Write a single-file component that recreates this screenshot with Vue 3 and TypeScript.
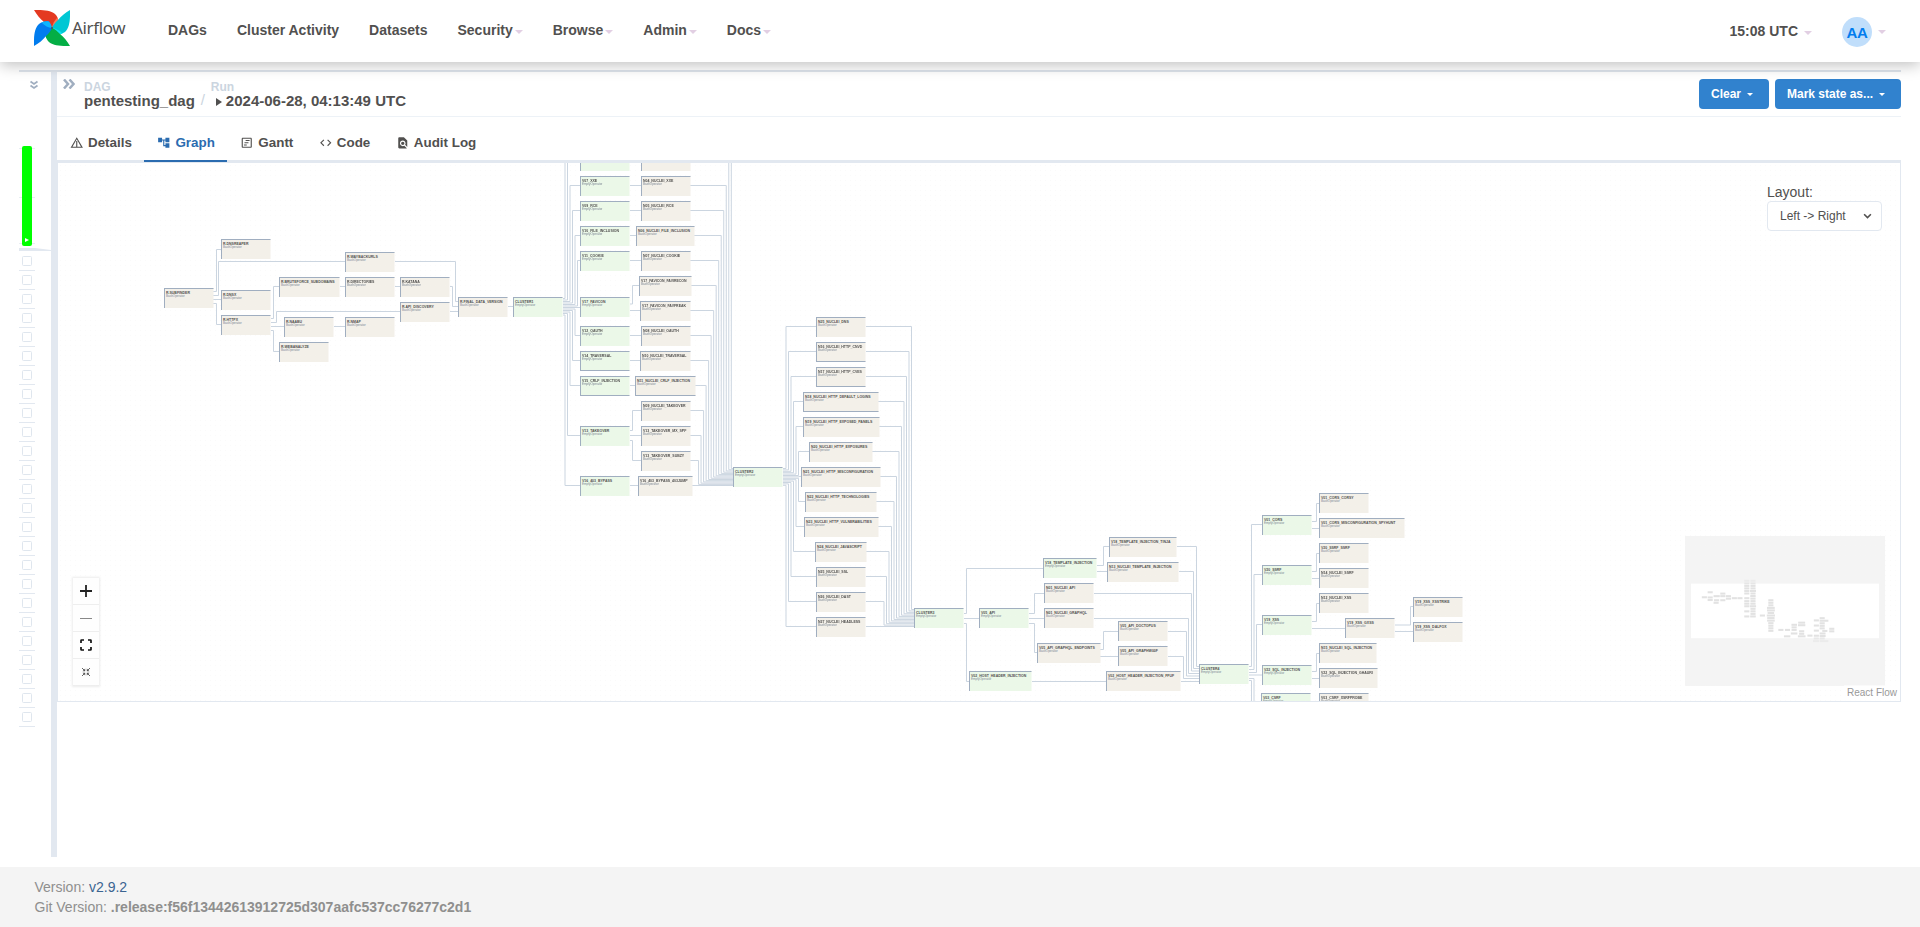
<script setup lang="ts">
interface GraphNode {
  label: string
  x: number
  y: number
  w: number
  empty: boolean
  closed: boolean
}

const ROW = 25
const node = (label: string, x: number, y: number, w = 50, closed = false): GraphNode => ({ label, x, y, w, empty: false, closed })
const group = (label: string, x: number, y: number, w = 50, closed = false): GraphNode => ({ label, x, y, w, empty: true, closed })

const nodes: GraphNode[] = [
  node('R.SUBFINDER', 164, 288),
  node('R.DNSREAPER', 221, 239),
  node('R.DNSX', 221, 290),
  node('R.HTTPX', 221, 315),
  node('R.WAYBACKURLS', 345, 252),
  node('R.BRUTEFORCE_SUBDOMAINS', 279, 277, 61),
  node('R.DIRECTORIES', 345, 277),
  node('R.KATANA', 400, 277),
  node('R.API_DISCOVERY', 400, 302),
  node('R.NAABU', 284, 317),
  node('R.NMAP', 345, 317),
  node('R.WEBANALYZE', 279, 342),
  node('R.FINAL_DATA_VERSION', 458, 297),
  group('CLUSTER1', 513, 297),
  group('V06_LDAP', 580, 126),
  group('V06_SSTI', 580, 151),
  group('V07_XXE', 580, 176),
  group('V09_RCE', 580, 201),
  group('V10_FILE_INCLUSION', 580, 226),
  group('V11_COOKIE', 580, 251),
  group('V17_FAVICON', 580, 297),
  group('V12_OAUTH', 580, 326),
  group('V14_TRAVERSAL', 580, 351, 50, true),
  group('V15_CRLF_INJECTION', 580, 376, 50, true),
  group('V13_TAKEOVER', 580, 426),
  group('V16_403_BYPASS', 580, 476),
  node('N02_NUCLEI_LDAP', 641, 126),
  node('N03_NUCLEI_SSTI', 641, 151),
  node('N04_NUCLEI_XXE', 641, 176),
  node('N05_NUCLEI_RCE', 641, 201),
  node('N06_NUCLEI_FILE_INCLUSION', 636, 226, 59),
  node('N07_NUCLEI_COOKIE', 641, 251),
  node('V17_FAVICON_FAVIRECON', 639, 276, 53),
  node('V17_FAVICON_FAVFREAK', 640, 301, 51),
  node('N08_NUCLEI_OAUTH', 641, 326),
  node('N10_NUCLEI_TRAVERSAL', 640, 351, 51),
  node('N11_NUCLEI_CRLF_INJECTION', 635, 376, 61, true),
  node('N09_NUCLEI_TAKEOVER', 641, 401),
  node('V13_TAKEOVER_MX_SPF', 641, 426),
  node('V13_TAKEOVER_SUBZY', 641, 451),
  node('V16_403_BYPASS_403JUMP', 638, 476, 55),
  group('CLUSTER2', 733, 467),
  node('N25_NUCLEI_DNS', 816, 317),
  node('N16_NUCLEI_HTTP_CNVD', 816, 342, 50, true),
  node('N17_NUCLEI_HTTP_CVES', 816, 367, 50, true),
  node('N18_NUCLEI_HTTP_DEFAULT_LOGINS', 803, 392, 76, true),
  node('N19_NUCLEI_HTTP_EXPOSED_PANELS', 803, 417, 77),
  node('N20_NUCLEI_HTTP_EXPOSURES', 809, 442, 64),
  node('N21_NUCLEI_HTTP_MISCONFIGURATION', 801, 467, 80),
  node('N22_NUCLEI_HTTP_TECHNOLOGIES', 805, 492, 72),
  node('N23_NUCLEI_HTTP_VULNERABILITIES', 804, 517, 75),
  node('N24_NUCLEI_JAVASCRIPT', 815, 542, 52),
  node('N25_NUCLEI_SSL', 816, 567),
  node('N26_NUCLEI_DAST', 816, 592),
  node('N27_NUCLEI_HEADLESS', 816, 617),
  group('CLUSTER3', 914, 608),
  group('V05_API', 979, 608),
  group('V18_TEMPLATE_INJECTION', 1043, 558, 54),
  node('V18_TEMPLATE_INJECTION_TINJA', 1109, 537, 68),
  node('N13_NUCLEI_TEMPLATE_INJECTION', 1107, 562, 72),
  node('N01_NUCLEI_API', 1044, 583),
  node('N01_NUCLEI_GRAPHQL', 1044, 608),
  node('V05_API_GRAPHQL_ENDPOINTS', 1037, 643, 64),
  node('V05_API_DOCTOPUS', 1118, 621),
  node('V05_API_GRAPHW00F', 1118, 646),
  group('V02_HOST_HEADER_INJECTION', 969, 671, 63),
  node('V02_HOST_HEADER_INJECTION_FFUF', 1106, 671, 75),
  group('CLUSTER4', 1199, 664),
  group('V01_CORS', 1262, 515),
  group('V20_SSRF', 1262, 565),
  group('V19_XSS', 1262, 615),
  group('V22_SQL_INJECTION', 1262, 665),
  group('V03_CSRF', 1261, 693),
  node('V01_CORS_CORSY', 1319, 493),
  node('V01_CORS_MISCONFIGURATION_SPYHUNT', 1319, 518, 86),
  node('V20_SSRF_SSRF', 1319, 543),
  node('N14_NUCLEI_SSRF', 1319, 568),
  node('N12_NUCLEI_XSS', 1319, 593),
  node('V19_XSS_GXSS', 1345, 618),
  node('N15_NUCLEI_SQL_INJECTION', 1319, 643, 58),
  node('V22_SQL_INJECTION_GHAURI', 1319, 668, 59),
  node('V03_CSRF_XSRFPROBE', 1319, 693),
  node('V19_XSS_XSSTRIKE', 1413, 597),
  node('V19_XSS_DALFOX', 1413, 622),
  group('V04_OPEN_REDIRECT', 1255, 718, 58),
  node('V04_OPEN_REDIRECT_OPENREDIREX', 1319, 718, 86),
]

const edges: string[] = [
  'M213 291.5H216.5V249.5H221', 'M213 295.5H218.5V261.5H345', 'M213 299.5H221', 'M213 303.5H216.5V324.5H221',
  'M395 261.5H455.5V301.5H458', 'M271 318.5H273.5V286.5H279', 'M271 322.5H276.5V311.5H400', 'M271 326.5H284',
  'M271 330.5H273.5V351.5H279', 'M340 286.5H345', 'M395 286.5H400', 'M450 286.5H452.5V306.5H458', 'M450 311.5H458',
  'M334 326.5H345', 'M508 306.5H513',
  'M630 304H632.5V285.5H639', 'M630 310.5H640', 'M630 430.5H632.5V410.5H641', 'M630 435.5H641',
  'M630 440.5H632.5V460.5H641',
  'M964 613.5H966.5V568.5H1043', 'M964 618.5H979', 'M964 623.5H966.5V681.5H969',
  'M1029 613.5H1034.5V593.5H1044', 'M1029 618.5H1044', 'M1029 623.5H1034.5V652.5H1037',
  'M1097 565.5H1103.5V546.5H1109', 'M1097 571.5H1107', 'M1100 649.5H1103.5V631.5H1118', 'M1100 656.5H1118',
  'M1177 546.5H1196.5V666.5H1199', 'M1179 571.5H1193.5V668.5H1199', 'M1094 593.5H1191.5V671H1199',
  'M1094 618.5H1188.5V673.5H1199', 'M1168 631.5H1186.5V676H1199', 'M1168 656.5H1183.5V678.5H1199',
  'M1181 681.5H1199', 'M1032 681.5H1106',
  'M1249 666.5H1251.5V524.5H1262', 'M1249 669.5H1254V574.5H1262', 'M1249 672.5H1256.5V624.5H1262',
  'M1249 675H1262', 'M1249 678.5H1254V720', 'M1249 680.5H1251.5V740',
  'M1312 521.5H1316.5V503.5H1319', 'M1312 528.5H1319', 'M1312 571.5H1316.5V553.5H1319', 'M1312 578.5H1319',
  'M1312 621.5H1316.5V603.5H1319', 'M1312 628.5H1345', 'M1312 671.5H1316.5V653.5H1319', 'M1312 678.5H1319',
  'M1395 625H1410.5V606.5H1413', 'M1395 631.5H1413',
]

// CLUSTER1 fans out to its groups
const firstFan: [number, number][] = [
  [565, 135.5], [567.5, 160.5], [570, 185.5], [572.5, 210.5], [575, 235.5], [577.5, 260.5], [580, 307],
  [575, 335.5], [572.5, 360.5], [570, 385.5], [567.5, 435.5], [565, 485.5],
]
firstFan.forEach(([x, y], i) => edges.push(`M563 ${298.5 + i * 1.5}H${x}V${y}H580`))

// rows with a single follow-up task, then everything merges into CLUSTER2
for (const y of [160.5, 185.5, 210.5, 235.5, 260.5, 335.5, 360.5, 385.5, 485.5]) edges.push(`M630 ${y}H641`)
for (let i = 0; i < 15; i++) {
  edges.push(`M686 ${135.5 + i * ROW}H${i === 14 ? 733 : 731.3 - i * 2.52}V${468.5 + i * 1.22}H733`)
}

// CLUSTER2 to CLUSTER3
for (let i = 0; i < 13; i++) {
  const y = 326.5 + i * ROW
  const out = i === 6 ? 799 : 798.5 - (Math.abs(i - 6) - 1) * 2.5
  edges.push(`M783 ${468.5 + i * 1.4}H${out}V${y}H816`)
  edges.push(`M866 ${y}H${i === 12 ? 914 : 911.5 - i * 2.5}V${609.5 + i * 1.42}H914`)
}

const SCALE = 4
const canvas = { x: 58, y: 163, bottom: 701 }
const place = (n: GraphNode) => ({
  left: `${(n.x - canvas.x) * SCALE}px`,
  top: `${(n.y - canvas.y) * SCALE}px`,
  width: `${(n.w - 0.4) * SCALE}px`,
})
const labelled = (n: GraphNode) => n.y >= canvas.y && n.y < canvas.bottom

const menu = [
  { label: 'DAGs', caret: false }, { label: 'Cluster Activity', caret: false }, { label: 'Datasets', caret: false },
  { label: 'Security', caret: true }, { label: 'Browse', caret: true }, { label: 'Admin', caret: true },
  { label: 'Docs', caret: true },
]
const tabs = [
  { label: 'Details', icon: 'M12 5.99L19.53 19H4.47L12 5.99M12 2L1 21h22L12 2zm-1 7h2v10h-2z' },
  { label: 'Graph', icon: 'M22 11V3h-7v3H9V3H2v8h7V8h2v10h4v3h7v-8h-7v3h-2V8h2v3z' },
  { label: 'Gantt', icon: 'M19 5v14H5V5h14m0-2H5c-1.1 0-2 .9-2 2v14c0 1.1.9 2 2 2h14c1.1 0 2-.9 2-2V5c0-1.1-.9-2-2-2zM10 7h7v2h-7zM8 11h7v2H8zM7 15h5v2H7z' },
  { label: 'Code', icon: 'M9.4 16.6L4.8 12l4.6-4.6L8 6l-6 6 6 6 1.4-1.4zm5.200 0l4.600-4.600-4.600-4.600L16 6l6 6-6 6-1.400-1.400z' },
  { label: 'Audit Log', icon: 'M14 2H6c-1.1 0-2 .9-2 2v16c0 1.100.9 2 2 2h12c.45 0 .85-.15 1.190-.4l-4.430-4.430c-.8.520-1.740.830-2.760.830-2.760 0-5-2.240-5-5s2.240-5 5-5 5 2.240 5 5c0 1.020-.310 1.960-.830 2.750L20 19.580V8l-6-6zM9 13a3 3 0 1 0 6 0 3 3 0 1 0-6 0z' },
]
const blades = [
  { turn: 0, fill: '#e43921', tint: '#ff7557' },
  { turn: 90, fill: '#00c7d4', tint: '#11e1ee' },
  { turn: 180, fill: '#04ae45', tint: '#00ad46' },
  { turn: 270, fill: '#017cee', tint: '#0cb6ff' },
]
</script>

<template>
  <div class="page">
    <header class="nav">
      <div class="brand">
        <svg class="pinwheel" viewBox="0 0 36 36">
          <g v-for="b in blades" :key="b.turn" :transform="`rotate(${b.turn} 18 18)`">
            <path d="M0 0C10-.3 18 .5 22 5c2 3 3 6 2.500 10L18 18c-3-1-5-3-8-6C6 9 3 5 0 0z" :fill="b.fill" />
            <path d="M18 18c.5-4 2-7 5.500-10.500C24.800 10 25 12.500 24.500 15c-2 1.500-4 2.500-6.500 3z" :fill="b.tint" />
          </g>
          <circle cx="18" cy="18" r="1" fill="#51504f" />
        </svg>
        <span class="wordmark">Airflow</span>
      </div>
      <nav class="menu">
        <a v-for="m in menu" :key="m.label">{{ m.label }}<i v-if="m.caret" class="caret" /></a>
      </nav>
      <div class="user">
        <span class="clock">15:08 UTC<i class="caret" /></span>
        <span class="avatar">AA</span>
        <i class="caret" />
      </div>
    </header>

    <main class="body">
      <aside class="grid">
        <svg class="fold" viewBox="0 0 10 10"><path d="M1.500 1.500L5 4l3.500-2.500M1.500 5.500L5 8l3.500-2.500" /></svg>
        <div class="bars">
          <div class="bar"><svg viewBox="0 0 4 4"><path d="M0 0l4 2-4 2z" fill="#fff" /></svg></div>
        </div>
        <div class="wedge" />
        <div v-for="i in 25" :key="i" class="cell"><span /></div>
      </aside>
      <div class="divider" />
      <section class="panel">
        <div class="crumbs">
          <svg class="expand" viewBox="0 0 12 10"><path d="M1 .5L5 5 1 9.500M6.500 .5l4 4.500-4 4.500" /></svg>
          <div class="crumb dag"><small>DAG</small><b>pentesting_dag</b></div>
          <span class="slash">/</span>
          <div class="crumb"><small>Run</small>
            <b><svg class="play" viewBox="0 0 6 8"><path d="M0 0l6 4-6 4z" /></svg>2024-06-28, 04:13:49 UTC</b>
          </div>
          <div class="actions">
            <button class="clear">Clear<i class="caret" /></button>
            <button class="mark">Mark state as...<i class="caret" /></button>
          </div>
        </div>
        <div class="tabs">
          <div v-for="t in tabs" :key="t.label" class="tab" :class="{ active: t.label === 'Graph' }">
            <svg viewBox="0 0 24 24"><path :d="t.icon" fill-rule="evenodd" /></svg>{{ t.label }}
          </div>
        </div>
        <div class="canvas">
          <svg class="edges" viewBox="58 163 1842 538"><path v-for="(d, i) in edges" :key="i" :d="d" /></svg>
          <div class="viewport">
            <div v-for="n in nodes" :key="n.label" class="node" :class="{ empty: n.empty, closed: n.closed }" :style="place(n)">
              <template v-if="labelled(n)">
                <b>{{ n.label }}</b>
                <span>{{ n.empty ? 'EmptyOperator' : 'BashOperator' }}</span>
              </template>
            </div>
          </div>
          <div class="layout">
            <label>Layout:</label>
            <div class="select">Left -&gt; Right<svg viewBox="0 0 8 6"><path d="M1 1l3 3 3-3" /></svg></div>
          </div>
          <div class="controls">
            <button><svg viewBox="0 0 12 12"><path d="M6 0v12M0 6h12" stroke="#222" stroke-width="1.800" /></svg></button>
            <button><svg viewBox="0 0 12 12"><path d="M0 6.500h12" stroke="#888" stroke-width="1" /></svg></button>
            <button><svg viewBox="0 0 12 12"><path d="M1 4V1.500Q1 1 1.500 1H4M8 1h2.500Q11 1 11 1.500V4M11 8v2.500Q11 11 10.500 11H8M4 11H1.500Q1 11 1 10.500V8" stroke="#111" stroke-width="1.700" /></svg></button>
            <button><svg viewBox="0 0 12 12"><path d="M2 2l2.500 2.500M10 2L7.500 4.500M2 10l2.500-2.500M10 10L7.500 7.500" stroke="#555" stroke-width=".9" /><path d="M5.200 2.500v2.700H2.500zM6.800 2.500v2.700h2.700zM5.200 9.500V6.800H2.500zM6.800 9.500V6.800h2.700z" fill="#555" /></svg></button>
          </div>
          <svg class="minimap" viewBox="0 0 200 150">
            <rect x="6" y="47.500" width="188" height="54.800" fill="#fff" />
            <rect v-for="n in nodes" :key="n.label" :x="6 + (n.x - 58) * 0.102" :y="47.500 + (n.y - 163) * 0.102" :width="n.w * 0.102" height="2.040" fill="#e2e2e2" />
            <path d="M0 0H200V150H0zM6 47.500V102.300H194V47.500z" fill="#f4f4f4" fill-opacity=".5" />
          </svg>
          <span class="credit">React Flow</span>
        </div>
      </section>
    </main>

    <footer class="foot">
      <div>Version: <a>v2.9.2</a></div>
      <div>Git Version: <b>.release:f56f13442613912725d307aafc537cc76277c2d1</b></div>
    </footer>
  </div>
</template>

<style>
body { margin: 0; background: #fff; overflow: hidden; }
</style>

<style scoped>
* { box-sizing: border-box; }
.page { width: 1920px; height: 927px; display: flex; flex-direction: column; font-family: "Liberation Sans", Arial, sans-serif; font-size: 14px; color: #51504f; }
.nav { height: 62px; flex: none; display: flex; background: #fff; box-shadow: 0 3px 14px rgba(0, 0, 0, .25); position: relative; z-index: 2; }
.brand { display: flex; padding-left: 34px; width: 153px; }
.pinwheel { width: 36px; height: 36px; margin-top: 10px; }
.wordmark { font: 17px/20px "Noto Sans", sans-serif; letter-spacing: -.35px; margin: 18px 0 0 2px; }
.menu { display: flex; font-weight: bold; line-height: 60px; }
.menu a { padding: 0 15px; white-space: nowrap; }
.caret { display: inline-block; border: 4px solid transparent; border-top-color: #e2cfe3; border-bottom: 0; margin-left: 2px; vertical-align: middle; position: relative; top: 1px; }
.user { margin-left: auto; display: flex; align-items: center; padding-right: 34px; height: 64px; }
.clock { font-weight: bold; line-height: 60px; margin-top: -3px; }
.clock .caret { margin-left: 6px; }
.avatar { width: 30px; height: 30px; border-radius: 50%; background: #c0defb; color: #017cee; font-weight: bold; font-size: 15px; letter-spacing: -.4px; line-height: 31px; text-align: center; margin: 0 6px 0 30px; }
.user > .caret { margin-left: 0; top: 0; }

.body { display: flex; flex: none; height: 787px; margin: 8px 19px 0; border-top: 2px solid #dde3eb; }
.grid { width: 32px; flex: none; }
.fold { display: block; width: 10px; height: 10px; margin: 8px 0 0 10px; fill: none; stroke: #a0aec0; stroke-width: 1.800; }
.bars { width: 16px; height: 100px; margin-top: 56px; padding-left: 3px; background: linear-gradient(#e9eef3, #e9eef3) 0 2px / 16px 1px no-repeat, linear-gradient(#e9eef3, #e9eef3) 0 51px / 16px 1px no-repeat, linear-gradient(#e9eef3, #e9eef3) 0 97px / 16px 1px no-repeat; }
.bar { width: 10px; height: 100px; border-radius: 2px; background: lime; display: flex; align-items: flex-end; justify-content: center; padding-bottom: 4px; }
.bar svg { width: 4px; height: 4px; }
.wedge { margin-top: 2px; height: 3px; background: #e2e8f0; clip-path: polygon(0 0, 50% 0, 100% 66%, 100% 100%, 0 100%); margin-bottom: 1px; }
.cell { width: 16px; height: 19px; border-bottom: 1px solid #e2e8f0; padding: 4px 0 0 3px; }
.cell span { display: block; width: 10px; height: 10px; border: 1px solid #dfe6ee; border-radius: 1.500px; }
.divider { width: 6px; flex: none; background: #e2e8f0; }
.panel { flex: 1; min-width: 0; }

.crumbs { height: 45px; display: flex; border-bottom: 1px solid #edf2f7; }
.expand { width: 12px; height: 10px; margin: 7px 0 0 6px; fill: none; stroke: #a0aec0; stroke-width: 2.500; }
.crumb { display: flex; flex-direction: column; font-size: 15px; white-space: nowrap; padding-top: 8px; }
.crumb.dag { margin-left: 9px; }
.crumb small { font-size: 12px; line-height: 14px; font-weight: bold; color: #cbd5e0; }
.crumb b { line-height: 15px; margin-top: -1px; }
.slash { margin: 19px 5px 0 6px; color: #cbd5e0; font-size: 15px; line-height: 18px; width: 5px; }
.play { width: 6px; height: 8px; margin: 0 4px 0 5px; fill: #51504f; }
.actions { margin-left: auto; display: flex; gap: 6px; padding-top: 7px; }
.actions button { height: 30px; border: 0; border-radius: 4px; background: #3182ce; color: #fff; font: bold 12px "Liberation Sans", Arial, sans-serif; text-align: left; padding: 0 0 0 12px; }
.actions .clear { width: 70px; }
.actions .mark { width: 126px; }
.actions .caret { border-width: 3px 3px 0; border-top-color: #fff; margin-left: 6px; top: 0; }

.tabs { height: 46px; display: flex; border-bottom: 3px solid #e2e8f0; }
.tab { display: flex; align-items: center; height: 45px; padding: 8px 12.500px 0 13px; font-size: 13.400px; font-weight: bold; border-bottom: 2px solid transparent; }
.tab svg { width: 13.500px; height: 13.500px; margin-right: 4.500px; fill: currentColor; }
.tab.active { color: #2b6cb0; border-color: #2b6cb0; }

.canvas { position: relative; height: 539px; overflow: hidden; border: 1px solid #e2e8f0; border-top: 0; background: radial-gradient(circle, #fafafa .5px, transparent .7px) 0 0 / 5px 5px; }
.edges { position: absolute; inset: 0; width: 1842px; height: 538px; fill: none; stroke: #cbd5e0; stroke-width: 1; }
.viewport { position: absolute; left: 0; top: 0; transform: scale(.25); transform-origin: 0 0; }
.node { position: absolute; height: 80px; background: #f3f0e9; border-top: 4px solid #a0aec0; border-left: 4px solid #a0aec0; padding: 5px 0 0 4px; font-size: 12px; line-height: 16px; white-space: nowrap; }
.node.empty { background: #ebf8e8; }
.node.closed { border-bottom: 4px solid #a0aec0; }
.node b { display: block; font-size: 14px; }
.node span { display: block; color: #7d8794; }

.layout { position: absolute; right: 18px; top: 21px; width: 115px; }
.layout label { display: block; line-height: 17px; }
.select { height: 30px; border: 1px solid #e2e8f0; border-radius: 4px; background: #fff; font-size: 12px; line-height: 28px; padding-left: 12px; display: flex; align-items: center; }
.select svg { width: 9px; height: 7px; margin-left: 17px; fill: none; stroke: #51504f; stroke-width: 1.400; }
.controls { position: absolute; left: 15px; top: 415px; width: 26px; box-shadow: 0 0 2px 1px rgba(0, 0, 0, .08); }
.controls button { width: 26px; height: 27px; display: flex; align-items: center; justify-content: center; padding: 0; background: #fefefe; border: 0; border-bottom: 1px solid #eee; }
.controls svg { width: 12px; height: 12px; fill: none; }
.minimap { position: absolute; right: 15px; bottom: 15px; width: 200px; height: 150px; background: #f5f5f5; }
.credit { position: absolute; right: 0; bottom: 0; font-size: 10px; line-height: 12px; padding: 2px 3px; color: #999; background: rgba(255, 255, 255, .5); }

.foot { flex: none; height: 60px; margin-top: 10px; padding: 10px 34.500px; background: #f4f4f4; color: #8f8f8e; line-height: 20px; }
.foot a { color: #3b6491; }
</style>
